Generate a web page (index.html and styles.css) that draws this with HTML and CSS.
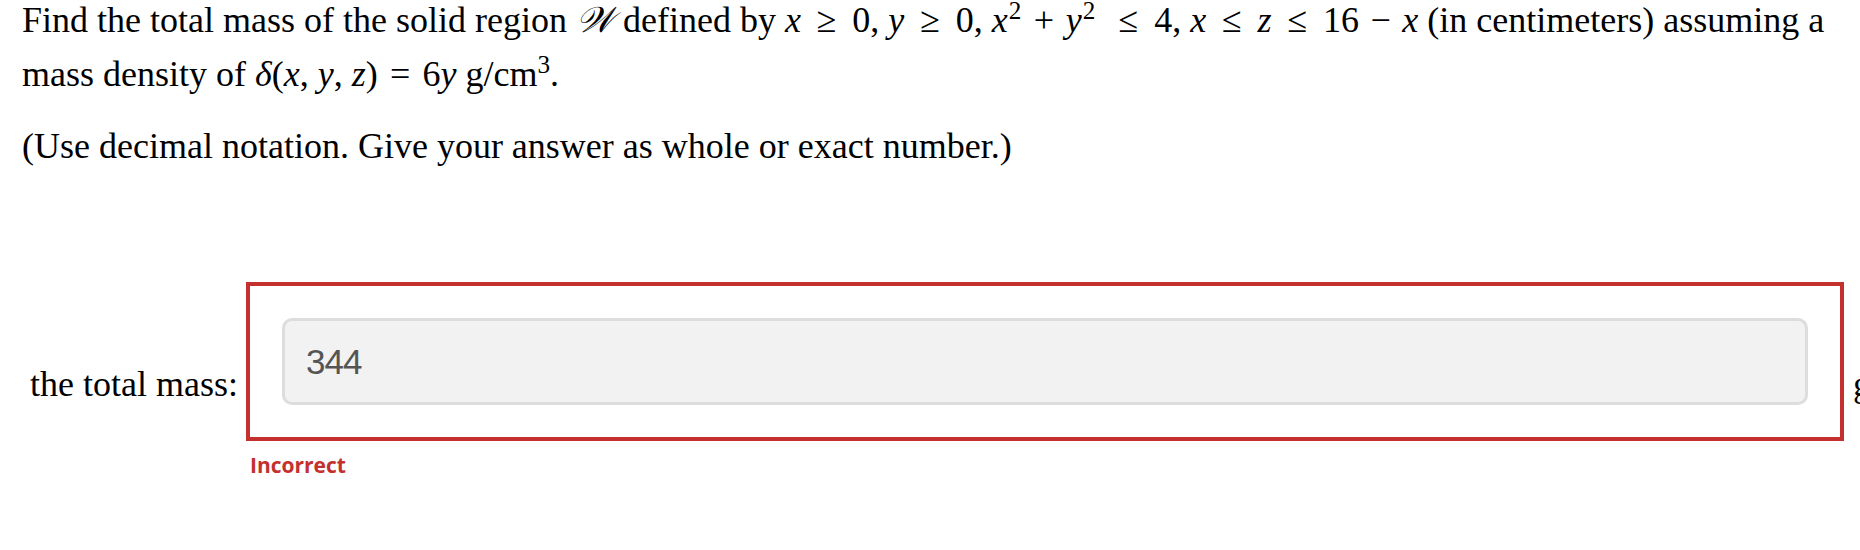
FILE: index.html
```html
<!DOCTYPE html>
<html lang="en">
<head>
<meta charset="utf-8">
<title>Total mass</title>
<link rel="stylesheet" href="styles.css">
</head>
<body>
<div class="page">
  <p class="question">Find the total mass of the solid region <span class="math script">𝒲</span> defined by <span class="math"><i>x</i><span class="rel">≥</span>0</span>, <span class="math"><i>y</i><span class="rel">≥</span>0</span>, <span class="math"><i>x</i><sup>2</sup><span class="bin">+</span><i>y</i><sup>2</sup><span class="rel">≤</span>4</span>, <span class="math"><i>x</i><span class="rel">≤</span><i>z</i><span class="rel">≤</span>16<span class="bin">−</span><i>x</i></span> (in centimeters) assuming a<br>mass density of <span class="math"><i>δ</i>(<i>x</i>, <i>y</i>, <i>z</i>)<span class="rel eq">=</span>6<i>y</i></span> g/cm<sup>3</sup>.</p>
  <p class="note">(Use decimal notation. Give your answer as whole or exact number.)</p>
  <div class="answer">
    <label class="answer-label" for="mass">the total mass:</label>
    <div class="answer-field">
      <div class="answer-box">
        <input class="answer-input" id="mass" type="text" value="344" readonly>
      </div>
      <div class="feedback">Incorrect</div>
    </div>
    <span class="unit">g</span>
  </div>
</div>
</body>
</html>
```

FILE: styles.css
```css
html, body {
  overflow: hidden;
}

body {
  margin: 0;
  background: #fff;
  color: #000;
  font-family: "Liberation Serif", "Times New Roman", serif;
  font-size: 36px;
}

.page {
  padding: 0 22px;
}

.question {
  margin: -7px 0 0;
  line-height: 54px;
  white-space: nowrap;
}

.note {
  margin: 18px 0 0;
  line-height: 54px;
  white-space: nowrap;
}

.math i {
  font-style: italic;
}

.script {
  font-style: italic;
}

.rel {
  margin: 0 0.44em;
}

.rel.eq {
  margin: 0 0.34em;
}

.bin {
  margin: 0 0.32em;
}

sup {
  font-size: 0.7em;
  line-height: 0;
  vertical-align: 0.5em;
}

.math sup {
  margin: 0 1px;
}

.math sup + .rel {
  margin-left: 0.62em;
}

.answer {
  display: flex;
  align-items: flex-start;
  margin-top: 109px;
  white-space: nowrap;
}

.answer-label {
  margin: 82px 8px 0 8px;
  line-height: 40px;
}

.answer-field {
  display: flex;
  flex-direction: column;
  flex: none;
}

.answer-box {
  box-sizing: border-box;
  width: 1598px;
  padding: 32px;
  border: 4px solid #c3302e;
}

.answer-input {
  display: block;
  box-sizing: border-box;
  width: 100%;
  height: 87px;
  margin: 0;
  padding: 0 21px;
  border: 3px solid #dddddd;
  border-radius: 10px;
  background: #f2f2f2;
  color: #555;
  font-family: "Liberation Sans", Arial, sans-serif;
  font-size: 35px;
  letter-spacing: -1px;
  outline: none;
}

.feedback {
  margin: 10px 0 0 4px;
  color: #c3302e;
  font-family: "Open Sans", "Liberation Sans", sans-serif;
  font-weight: 700;
  font-size: 21px;
  line-height: 28px;
}

.unit {
  margin: 82px 0 0 9px;
  line-height: 40px;
}
```
